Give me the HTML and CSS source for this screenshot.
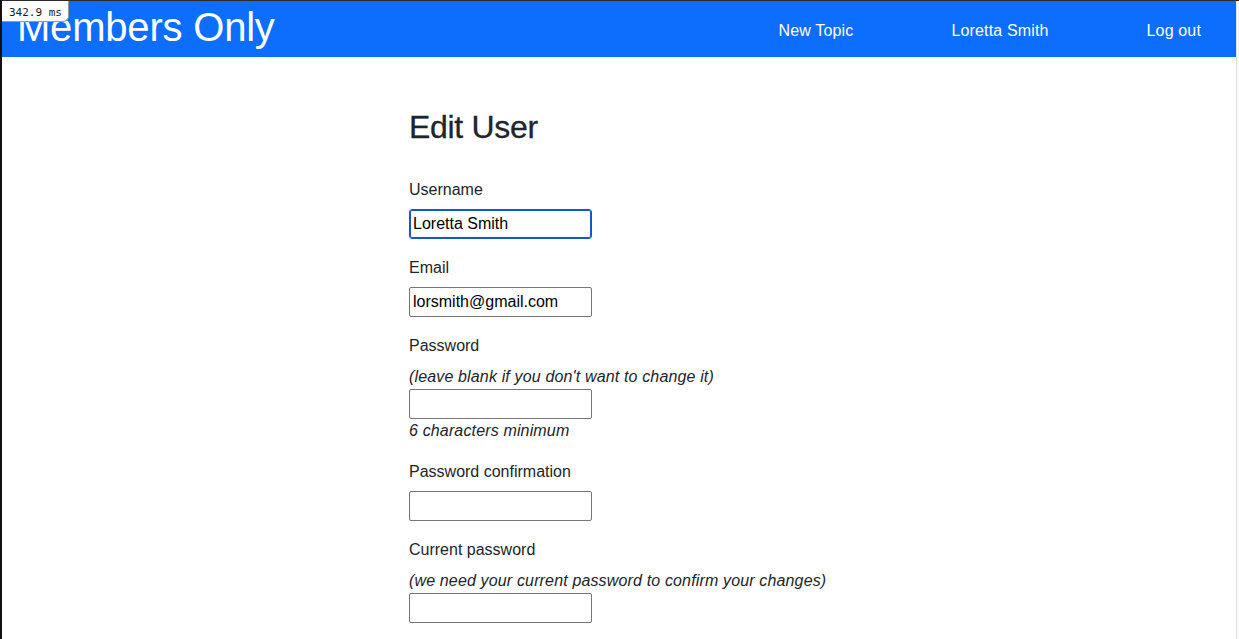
FILE: index.html
```html
<!DOCTYPE html>
<html lang="en">
<head>
<meta charset="utf-8">
<title>Edit User – Members Only</title>
<link rel="stylesheet" href="styles.css">
</head>
<body>
  <div class="frame">
    <div class="page">
      <header class="navbar">
        <a class="brand" href="#">Members Only</a>
        <nav class="nav-links">
          <a href="#">New Topic</a>
          <a href="#">Loretta Smith</a>
          <a href="#">Log out</a>
        </nav>
      </header>
      <main class="content">
        <h1 class="title">Edit User</h1>
        <form class="form">
          <div class="field">
            <label class="label" for="username">Username</label>
            <input class="input is-focused" id="username" type="text" value="Loretta Smith">
          </div>
          <div class="field">
            <label class="label" for="email">Email</label>
            <input class="input" id="email" type="email" value="lorsmith@gmail.com">
          </div>
          <div class="field">
            <label class="label" for="password">Password</label>
            <i class="note">(leave blank if you don't want to change it)</i>
            <input class="input" id="password" type="password">
            <em class="note">6 characters minimum</em>
          </div>
          <div class="field">
            <label class="label" for="password_confirmation">Password confirmation</label>
            <input class="input" id="password_confirmation" type="password">
          </div>
          <div class="field">
            <label class="label" for="current_password">Current password</label>
            <i class="note">(we need your current password to confirm your changes)</i>
            <input class="input" id="current_password" type="password">
          </div>
        </form>
      </main>
      <div class="timing">342.9 ms</div>
    </div>
    <div class="scrollbar"></div>
  </div>
</body>
</html>
```

FILE: styles.css
```css
html, body {
  margin: 0;
  padding: 0;
  height: 100%;
  overflow: hidden;
  background: #ffffff;
}

.frame {
  display: flex;
  height: 100%;
  box-sizing: border-box;
  border-top: 1px solid #2b2b2b;
  border-left: 2px solid #111111;
  font-family: "Liberation Sans", Arial, sans-serif;
  color: #212529;
}

.page {
  position: relative;
  flex: 1;
  min-width: 0;
}

.scrollbar {
  width: 2px;
  border-left: 1px solid #e2e2e2;
  background: #fafafa;
}

.navbar {
  display: flex;
  align-items: flex-start;
  height: 56px;
  background: #0d6efd;
  padding: 0 35px 0 15px;
}

.brand {
  margin-top: 2px;
  font-size: 40px;
  line-height: 48px;
  color: #ffffff;
  text-decoration: none;
  letter-spacing: -0.2px;
}

.nav-links {
  display: flex;
  margin-left: auto;
  gap: 98px;
  padding-top: 18px;
}

.nav-links a {
  font-size: 16px;
  line-height: 24px;
  color: #ffffff;
  text-decoration: none;
  letter-spacing: 0.15px;
}

.content {
  width: 420px;
  margin: 0 auto;
  padding-top: 51px;
}

.title {
  margin: 0 0 31px;
  font-size: 32px;
  line-height: 38.4px;
  font-weight: 500;
  letter-spacing: -0.3px;
  -webkit-text-stroke: 0.3px #212529;
}

.form {
  display: flex;
  flex-direction: column;
  gap: 16px;
}

.field {
  display: flex;
  flex-direction: column;
  align-items: flex-start;
}

.label {
  font-size: 16px;
  line-height: 24px;
  padding-top: 1px;
  margin-bottom: 7px;
}

.note {
  font-size: 16px;
  line-height: 24px;
  font-style: italic;
  white-space: nowrap;
  letter-spacing: 0.15px;
}

.input {
  box-sizing: border-box;
  width: 183px;
  height: 30px;
  margin: 0;
  padding: 1px 3px;
  border: 1px solid #767676;
  border-radius: 2px;
  background: #ffffff;
  font-family: "Liberation Sans", Arial, sans-serif;
  font-size: 16px;
  color: #000000;
  outline: none;
}

.input.is-focused {
  border-color: #1557c6;
  box-shadow: inset 0 0 0 1px #1557c6;
  border-radius: 3px;
}

.timing {
  position: absolute;
  top: 0;
  left: 0;
  box-sizing: border-box;
  width: 67px;
  height: 21px;
  padding: 5px 0 0 7px;
  background: #ffffff;
  border-right: 1px solid #9a9a9a;
  border-bottom: 1px solid #9a9a9a;
  border-bottom-right-radius: 6px;
  font-family: "DejaVu Sans Mono", "Liberation Mono", monospace;
  font-size: 11px;
  line-height: 13px;
  color: #1a1a1a;
  white-space: nowrap;
}
```
